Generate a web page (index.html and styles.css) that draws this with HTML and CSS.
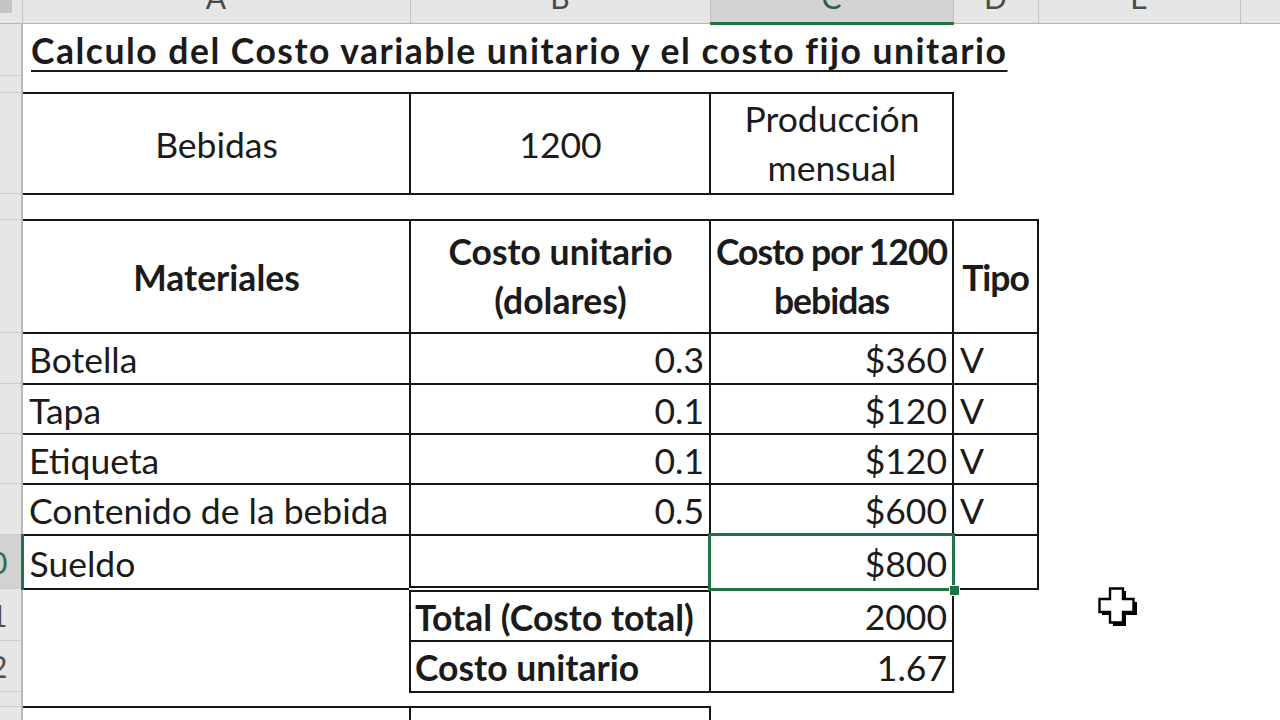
FILE: index.html
```html
<!DOCTYPE html>
<html lang="es">
<head>
<meta charset="utf-8">
<title>Calculo del Costo</title>
<link rel="stylesheet" href="styles.css">
</head>
<body>
<div class="sheet-wrap">
<table class="sheet">
  <colgroup>
    <col class="w-rh"><col class="w-a"><col class="w-b"><col class="w-c"><col class="w-d"><col class="w-e"><col class="w-f">
  </colgroup>
  <thead>
    <tr class="hdr">
      <th class="corner"><div class="corner-tri"></div></th>
      <th class="ch"><div class="cl">A</div></th>
      <th class="ch"><div class="cl">B</div></th>
      <th class="ch ch-sel"><div class="cl">C</div></th>
      <th class="ch"><div class="cl">D</div></th>
      <th class="ch"><div class="cl">E</div></th>
      <th class="ch"><div class="cl cl-f">F</div></th>
    </tr>
  </thead>
  <tbody>
    <tr class="h1">
      <td class="rh"><div class="rn">1</div></td>
      <td class="title" colspan="4"><span class="title-text">Calculo del Costo variable unitario y el costo fijo unitario</span></td>
      <td></td><td></td>
    </tr>
    <tr class="h2">
      <td class="rh rh-thin"><div class="rn">2</div></td>
      <td></td><td></td><td></td><td></td><td></td><td></td>
    </tr>
    <tr class="h3">
      <td class="rh"><div class="rn">3</div></td>
      <td class="b c">Bebidas</td>
      <td class="b c">1200</td>
      <td class="b c lh50">Producción<br>mensual</td>
      <td></td><td></td><td></td>
    </tr>
    <tr class="h4">
      <td class="rh rh-thin"><div class="rn">4</div></td>
      <td></td><td></td><td></td><td></td><td></td><td></td>
    </tr>
    <tr class="h5">
      <td class="rh"><div class="rn">5</div></td>
      <td class="b c bold">Materiales</td>
      <td class="b c bold lh50">Costo unitario<br>(dolares)</td>
      <td class="b c bold lh50 tight">Costo por 1200<br>bebidas</td>
      <td class="b c bold tight">Tipo</td>
      <td></td><td></td>
    </tr>
    <tr class="h6">
      <td class="rh"><div class="rn">6</div></td>
      <td class="b">Botella</td>
      <td class="b r">0.3</td>
      <td class="b r">$360</td>
      <td class="b">V</td>
      <td></td><td></td>
    </tr>
    <tr class="h7">
      <td class="rh"><div class="rn">7</div></td>
      <td class="b">Tapa</td>
      <td class="b r">0.1</td>
      <td class="b r">$120</td>
      <td class="b">V</td>
      <td></td><td></td>
    </tr>
    <tr class="h8">
      <td class="rh"><div class="rn">8</div></td>
      <td class="b">Etiqueta</td>
      <td class="b r">0.1</td>
      <td class="b r">$120</td>
      <td class="b">V</td>
      <td></td><td></td>
    </tr>
    <tr class="h9">
      <td class="rh"><div class="rn">9</div></td>
      <td class="b">Contenido de la bebida</td>
      <td class="b r">0.5</td>
      <td class="b r">$600</td>
      <td class="b">V</td>
      <td></td><td></td>
    </tr>
    <tr class="h10">
      <td class="rh rh-sel"><div class="rn">10</div></td>
      <td class="b">Sueldo</td>
      <td class="b dbl-bottom"></td>
      <td class="b r sel-cell">$800</td>
      <td class="b"></td>
      <td></td><td></td>
    </tr>
    <tr class="h11">
      <td class="rh"><div class="rn">11</div></td>
      <td></td>
      <td class="b bold pl">Total (Costo total)</td>
      <td class="b r">2000</td>
      <td></td>
      <td class="cursor-cell"><svg class="cursor" viewBox="0 0 42 42" width="42" height="42" aria-hidden="true"><polygon points="15,4 28,4 28,15 39,15 39,28 28,28 28,39 15,39 15,28 4,28 4,15 15,15" fill="#000"/><polygon points="12,1.5 25,1.5 25,12 35.5,12 35.5,25 25,25 25,35.5 12,35.5 12,25 1.5,25 1.5,12 12,12" fill="#fff" stroke="#000" stroke-width="2.4"/></svg></td>
      <td></td>
    </tr>
    <tr class="h12">
      <td class="rh"><div class="rn">12</div></td>
      <td></td>
      <td class="b bold pl">Costo unitario</td>
      <td class="b r">1.67</td>
      <td></td><td></td><td></td>
    </tr>
    <tr class="h13">
      <td class="rh rh-thin"><div class="rn">13</div></td>
      <td></td><td></td><td></td><td></td><td></td><td></td>
    </tr>
    <tr class="h14">
      <td class="rh"><div class="rn">14</div></td>
      <td class="b"></td>
      <td class="b"></td>
      <td></td><td></td><td></td><td></td>
    </tr>
  </tbody>
</table>
</div>
</body>
</html>
```

FILE: styles.css
```css
html, body {
  margin: 0;
  padding: 0;
  background: #ffffff;
}

body {
  width: 1280px;
  height: 720px;
  overflow: hidden;
  font-family: Lato, "Open Sans", "Liberation Sans", sans-serif;
  color: #1b1b1b;
}

.sheet-wrap {
  width: 1280px;
  height: 720px;
  overflow: hidden;
}

.sheet {
  border-collapse: collapse;
  table-layout: fixed;
  width: 1280px;
  font-size: 35.5px;
}

.w-rh { width: 22px; }
.w-a { width: 388px; }
.w-b { width: 300px; }
.w-c { width: 243px; }
.w-d { width: 85px; }
.w-e { width: 202px; }
.w-f { width: 40px; }

.sheet td {
  padding: 4px 5px 0 6px;
  vertical-align: middle;
  white-space: nowrap;
  line-height: 38px;
}

/* column header row */
.hdr { height: 22px; }

.sheet th {
  padding: 0;
  height: 22px;
  background: #e6e6e6;
  border-right: 1px solid #c3c3c3;
  border-bottom: 1px solid #b4b4b4;
  overflow: hidden;
  vertical-align: top;
  font-weight: normal;
}

.corner-tri {
  width: 12px;
  height: 13px;
  background: #c4c4c4;
}

.cl {
  font-size: 30px;
  line-height: 30px;
  margin-top: -18px;
  text-align: center;
  color: #4a4a4a;
}

.cl-f { visibility: hidden; }

.sheet th.ch-sel {
  background: #d3d3d3;
  border-bottom: 3px solid #217346;
}

.ch-sel .cl { color: #2e5e48; }

/* row header */
.sheet td.rh {
  padding: 0;
  background: #e6e6e6;
  border-bottom: 1px solid #cbcbcb;
  border-right: 2px solid #b8b8b8;
  overflow: hidden;
}

.rn {
  width: 60px;
  margin-left: -40px;
  text-align: center;
  font-size: 30px;
  line-height: 30px;
  color: #4e4e4e;
}

.sheet td.rh-sel {
  background: #d2d2d2;
  border-right: 3px solid #217346;
}

.rh-sel .rn { color: #2f6b4c; }

.rh-thin .rn { display: none; }

/* row heights */
.h1 { height: 52px; }
.h2 { height: 17px; }
.h3 { height: 101px; }
.h4 { height: 26px; }
.h5 { height: 113px; }
.h6 { height: 51px; }
.h7 { height: 50px; }
.h8 { height: 50px; }
.h9 { height: 51px; }
.h10 { height: 54px; }
.h11 { height: 52px; }
.h12 { height: 51px; }
.h13 { height: 15px; }
.h14 { height: 50px; }

/* title */
.sheet td.title {
  vertical-align: top;
  padding-top: 7px;
  padding-left: 8px;
}

.title-text {
  font-weight: bold;
  letter-spacing: 1.5px;
  text-decoration: underline;
  text-decoration-thickness: 2px;
  text-underline-offset: 6px;
}

/* cell formats */
.sheet td.b { border: 2px solid #161616; }
.c { text-align: center; }
.r { text-align: right; }
.bold { font-weight: bold; }
.sheet td.lh50 { line-height: 49px; padding-top: 0; }
.sheet td.tight { padding-left: 2px; padding-right: 2px; letter-spacing: -1px; }
.sheet td.pl { padding-left: 4px; }

.sheet td.dbl-bottom { border-bottom: 6px double #161616; }

/* selected cell */
.sheet td.sel-cell {
  position: relative;
}

.sel-cell::after {
  content: "";
  position: absolute;
  left: -3px;
  top: -3px;
  right: -3px;
  bottom: -3px;
  border: 3px solid #217346;
  pointer-events: none;
}

.sel-cell::before {
  content: "";
  position: absolute;
  right: -8px;
  bottom: -8px;
  width: 9px;
  height: 9px;
  background: #217346;
  border: 1px solid #ffffff;
  z-index: 2;
}

/* mouse cursor */
.sheet td.cursor-cell {
  position: relative;
}

.cursor {
  position: absolute;
  left: 60px;
  top: -2px;
}
```
